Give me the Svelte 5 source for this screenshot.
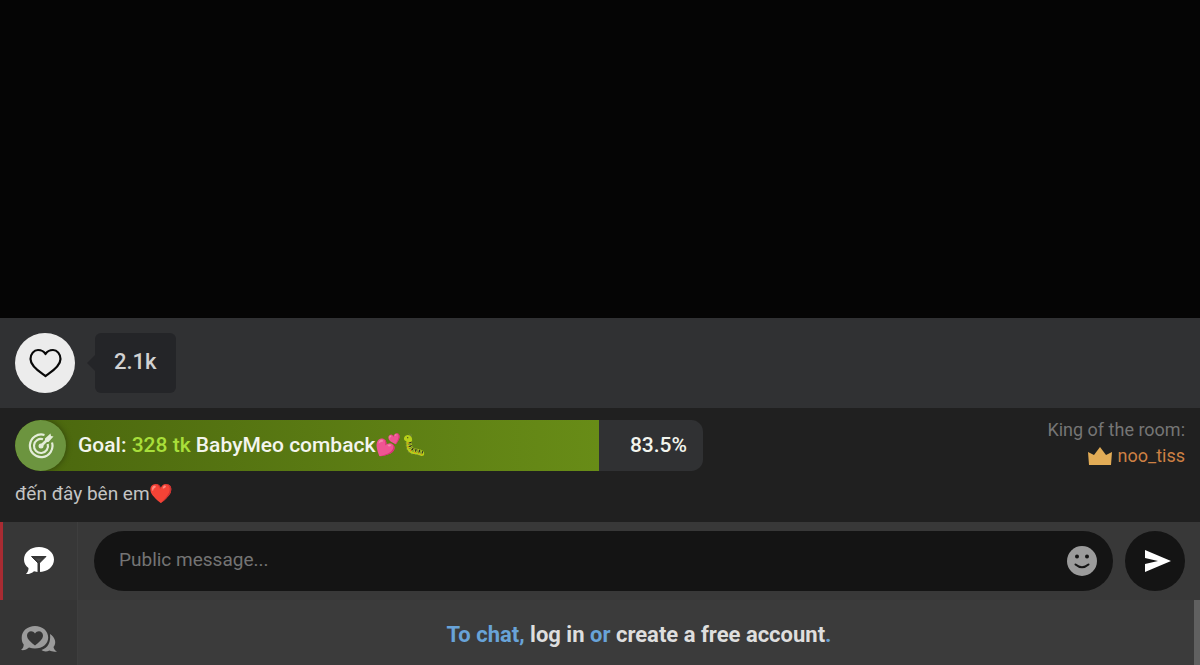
<script>
    let likes = '2.1k';
    let goal = { left: 328, title: 'BabyMeo comback💕🐛', percent: 83.5 };
    let topic = 'đến đây bên em❤️';
    let king = 'noo_tiss';
    let message = '';
    let activeTab = 'public';

    function handleSubmit() {
        message = message.trim();
    }
</script>

<div class="room">
    <div class="video"></div>

    <div class="likes">
        <button class="like" type="button" aria-label="Like">
            <svg width="36" height="32" viewBox="-0.5 -1.5 36 32">
                <path
                    d="M18 27.500C14 24.500 3 18.500 3 10.500C3 5.500 6.500 1.500 10.500 1.500C14 1.500 16.500 3 18 5.500C19.500 3 22 1.500 25.500 1.500C29.500 1.500 33 5.500 33 10.500C33 18.500 22 24.500 18 27.500Z"
                    fill="none" stroke="#080808" stroke-width="2.200" stroke-linejoin="round" />
            </svg>
        </button>
        <div class="count">{likes}</div>
    </div>

    <div class="info">
        <div class="about">
            <div class="goal">
                <div class="fill" style="width: {goal.percent}%"></div>
                <div class="target">
                    <svg width="26" height="26" viewBox="0 0 26 26" fill="none" stroke="#e4edd9">
                        <path d="M16.500 2A11.300 11.300 0 1 0 24 9.500" stroke-width="2.200" />
                        <path d="M15 6.300A7 7 0 1 0 19.700 11" stroke-width="2.200" />
                        <circle cx="13" cy="13" r="2.500" fill="#e4edd9" stroke="none" />
                        <path d="M12.500 13.500L20 6" stroke-width="2.600" />
                        <path d="M17 5.500L22.500 0.500L23 3L25.500 3.500L20.500 9L17 9Z" fill="#e4edd9" stroke="none" />
                    </svg>
                </div>
                <div class="goal-text">Goal: <span>{goal.left} tk</span> {goal.title}</div>
                <div class="percent">{goal.percent}%</div>
            </div>
            <div class="topic">{topic}</div>
        </div>
        <div class="king">
            <div>King of the room:</div>
            <div class="king-name">
                <svg width="24" height="18" viewBox="0 0 24 18">
                    <path d="M0 5L6 8L12 0L18 8L24 5L23 18H1Z" fill="#e2ac56" />
                </svg>
                {king}
            </div>
        </div>
    </div>

    <div class="chat">
        <div class="tabs">
            <button
                class="tab"
                class:active={activeTab === 'public'}
                type="button"
                aria-label="Public chat"
                on:click={() => (activeTab = 'public')}
            >
                <svg width="30" height="28" viewBox="0 0 30 28">
                    <path
                        d="M15 0C23.500 0 30 5.500 30 12.500C30 19.500 23.500 25 15 25C13 25 11.500 24.700 10 24.200C8 26.200 5 27.200 2 27C4 25 4.500 23 4.500 21C1.500 19 0 16 0 12.500C0 5.500 6.500 0 15 0Z"
                        fill="currentColor" />
                    <path d="M7.500 9.500H22L15.500 16V25H14V16Z" fill="#373737" stroke="#373737" stroke-linejoin="round" />
                    <path d="M11 11.500H18.500L14.800 14.500Z" fill="#4a4a4a" />
                </svg>
            </button>
            <button
                class="tab"
                class:active={activeTab === 'private'}
                type="button"
                aria-label="Private chats"
                on:click={() => (activeTab = 'private')}
            >
                <svg width="36" height="26" viewBox="0 0 36 26">
                    <path d="M29 8C34 11 36 17 32.500 21C33 23 34 24.500 36 25.500C33 26 30.500 25.500 28.500 24.500C25.500 26 22 25.500 20.500 24C27 22 30 16 29 8Z" fill="currentColor" />
                    <path
                        d="M14 0C21.500 0 27.200 5 27.200 11.500C27.200 18 21.500 22.500 14 22.500C12 22.500 10 22.200 8 21.500C6 23.500 3 24.500 0 24C2 22.500 2.700 20.500 2.700 18.500C1 16.500 0.700 14 0.700 11.500C0.700 5 6.500 0 14 0Z"
                        fill="currentColor" />
                    <path d="M14 19.500C11 17 6 13.500 6 9.500C6 5 11.500 3.500 14 7.500C16.500 3.500 22 5 22 9.500C22 13.500 17 17 14 19.500Z" fill="#353535" />
                </svg>
            </button>
        </div>

        <div class="main">
            <form on:submit|preventDefault={handleSubmit}>
                <div class="field">
                    <input type="text" aria-label="Public message" placeholder="Public message..." bind:value={message} />
                    <button class="smile" type="button" aria-label="Emoji">
                        <svg width="30" height="30" viewBox="0 0 30 30">
                            <circle cx="15" cy="15" r="15" fill="#9b9b9b" />
                            <circle cx="10" cy="10.500" r="2" fill="#151515" />
                            <circle cx="20" cy="10.500" r="2" fill="#151515" />
                            <path d="M8.500 18.500Q15 24 21.500 18.500" fill="none" stroke="#151515" stroke-width="2" stroke-linecap="round" />
                        </svg>
                    </button>
                </div>
                <button class="send" type="submit" aria-label="Send">
                    <svg width="26" height="22" viewBox="0 0 26 22">
                        <path d="M0 0L26 11L0 22V14L13 11L0 8Z" fill="#fff" />
                    </svg>
                </button>
            </form>
            <div class="log">
                <p>To chat, <a href="#login">log in</a> or <a href="#signup">create a free account</a>.</p>
                <div class="scrollbar"></div>
            </div>
        </div>
    </div>
</div>

<style>
    :global(body) {
        background: #050505;
        font-family: Roboto, "Noto Color Emoji", sans-serif;
    }

    .room {
        display: flex;
        flex-direction: column;
        min-height: 100vh;
    }

    button {
        display: flex;
        align-items: center;
        justify-content: center;
        flex-shrink: 0;
        padding: 0;
        border: none;
        background: none;
        cursor: pointer;
    }

    .video {
        flex: 1;
        background: #050505;
    }

    .likes {
        display: flex;
        gap: 20px;
        padding: 15px;
        background: #303133;
    }

    .like {
        width: 60px;
        height: 60px;
        border-radius: 50%;
        background: #ececec;
    }

    .count {
        position: relative;
        padding: 0 19px 2px;
        border-radius: 6px;
        background: #242528;
        color: #d2d2d2;
        font-size: 22px;
        font-weight: 500;
        line-height: 58px;
    }

    .count::before {
        content: '';
        position: absolute;
        top: 22px;
        left: -8px;
        border: 8px solid transparent;
        border-left: none;
        border-right-color: #242528;
    }

    .info {
        display: flex;
        justify-content: space-between;
        gap: 20px;
        padding: 12px 15px;
        background: #202020;
    }

    .about {
        flex: 0 1 688px;
    }

    .goal {
        position: relative;
        display: flex;
        align-items: center;
        height: 51px;
        border-radius: 26px 12px 12px 26px;
        background: #303133;
        overflow: hidden;
        color: #f3f5ee;
        font-size: 21px;
        font-weight: 500;
        line-height: 24px;
    }

    /* progress lies under the goal text */
    .fill {
        position: absolute;
        top: 0;
        bottom: 0;
        left: 0;
        padding-right: 10px;
        background: linear-gradient(90deg, #4a660e, #688c17);
    }

    .target {
        position: relative;
        display: flex;
        align-items: center;
        justify-content: center;
        width: 51px;
        height: 51px;
        border-radius: 50%;
        background: #6c943f;
        box-shadow: 0 0 6px rgba(0, 0, 0, 0.4);
    }

    .goal-text {
        position: relative;
        flex: 1;
        padding: 0 0 2px 12px;
    }

    .goal-text span {
        color: #a8df3a;
    }

    .percent {
        position: relative;
        padding: 0 16px 2px 0;
    }

    .topic {
        padding: 8px 0 2px;
        color: #c4c4c4;
        font-size: 19px;
        line-height: 29px;
    }

    .king {
        color: #757575;
        font-size: 18px;
        line-height: 20px;
        text-align: right;
    }

    .king-name {
        display: flex;
        align-items: center;
        justify-content: flex-end;
        gap: 6px;
        padding-top: 6px;
        color: #ce8044;
    }

    .chat {
        display: flex;
        height: 143px;
        background: #3b3b3b;
        overflow: hidden;
    }

    .tabs {
        flex: 0 0 77px;
        border-right: 1px solid #3e3e3e;
        background: #353535;
    }

    .tab {
        width: 100%;
        height: 78px;
        border-left: 3px solid transparent;
        border-right: 3px solid transparent;
        color: #9b9b9b;
    }

    .tab.active {
        border-left-color: #a82b32;
        background: #373737;
        color: #fff;
    }

    .main {
        flex: 1;
        display: flex;
        flex-direction: column;
    }

    form {
        display: flex;
        gap: 12px;
        padding: 9px 15px 9px 16px;
        background: #383838;
    }

    .field {
        flex: 1;
        display: flex;
        align-items: center;
        height: 60px;
        padding: 0 16px 0 25px;
        box-sizing: border-box;
        border-radius: 30px;
        background: #141414;
    }

    input {
        flex: 1;
        min-width: 0;
        padding: 0 0 4px;
        border: none;
        outline: none;
        background: none;
        color: #d8d8d8;
        font-family: inherit;
        font-size: 19px;
    }

    input::placeholder {
        color: #747474;
    }

    .send {
        width: 60px;
        height: 60px;
        padding-left: 6px;
        border-radius: 50%;
        background: #141414;
    }

    .log {
        flex: 1;
        display: flex;
    }

    .log p {
        flex: 1;
        margin: 0;
        padding: 20px 0 0 6px;
        color: #68a3d8;
        font-size: 22px;
        font-weight: 700;
        line-height: 30px;
        text-align: center;
    }

    .log a {
        color: #dedede;
        text-decoration: none;
    }

    .scrollbar {
        width: 6px;
        background: #606060;
    }
</style>
